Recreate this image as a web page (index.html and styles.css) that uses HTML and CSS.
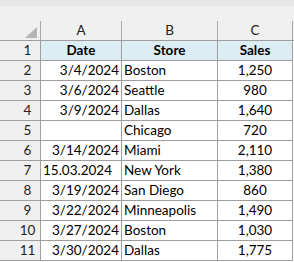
FILE: index.html
```html
<!DOCTYPE html>
<html>
<head>
<meta charset="utf-8">
<link rel="stylesheet" href="styles.css">
</head>
<body>
<div class="sheet">
  <div class="topband"></div>
  <div class="colheads">
    <div class="ch corner"><span class="tri"></span></div>
    <div class="ch ca">A</div>
    <div class="ch cb">B</div>
    <div class="ch cc">C</div>
  </div>
  <div class="grid">
    <div class="rh">1</div><div class="c hd">Date</div><div class="c hd">Store</div><div class="c hd">Sales</div>
    <div class="rh">2</div><div class="c r">3/4/2024</div><div class="c l">Boston</div><div class="c m">1,250</div>
    <div class="rh">3</div><div class="c r">3/6/2024</div><div class="c l">Seattle</div><div class="c m">980</div>
    <div class="rh">4</div><div class="c r">3/9/2024</div><div class="c l">Dallas</div><div class="c m">1,640</div>
    <div class="rh">5</div><div class="c r"></div><div class="c l">Chicago</div><div class="c m">720</div>
    <div class="rh">6</div><div class="c r">3/14/2024</div><div class="c l">Miami</div><div class="c m">2,110</div>
    <div class="rh">7</div><div class="c l">15.03.2024</div><div class="c l">New York</div><div class="c m">1,380</div>
    <div class="rh">8</div><div class="c r">3/19/2024</div><div class="c l">San Diego</div><div class="c m">860</div>
    <div class="rh">9</div><div class="c r">3/22/2024</div><div class="c l">Minneapolis</div><div class="c m">1,490</div>
    <div class="rh">10</div><div class="c r">3/27/2024</div><div class="c l">Boston</div><div class="c m">1,030</div>
    <div class="rh">11</div><div class="c r">3/30/2024</div><div class="c l">Dallas</div><div class="c m">1,775</div>
  </div>
</div>
</body>
</html>
```
FILE: styles.css
```css
html, body {
  margin: 0;
  padding: 0;
  background: #ffffff;
}
body {
  font-family: Lato, "Liberation Sans", sans-serif;
  font-size: 13.5px;
  color: #000000;
}
.sheet {
  width: 294px;
  height: 262px;
  overflow: hidden;
}
.topband {
  height: 6px;
  background: #e6e6e6;
}
.colheads {
  display: grid;
  grid-template-columns: 41px 81px 96px 75px;
  height: 34px;
  align-items: end;
  background: #f0f0f0;
  border-bottom: 1px solid #9e9e9e;
}
.ch {
  height: 19px;
  box-sizing: border-box;
  border-right: 1px solid #ababab;
  text-align: center;
  line-height: 18px;
  color: #222222;
}
.corner {
  display: flex;
  justify-content: flex-end;
  align-items: flex-end;
  padding: 0 3px 2px 0;
}
.tri {
  width: 0;
  height: 0;
  border-left: 12px solid transparent;
  border-bottom: 11px solid #b5b5b5;
}
.grid {
  display: grid;
  grid-template-columns: 41px 81px 96px 75px;
  grid-auto-rows: 20px;
}
.grid > div {
  box-sizing: border-box;
  border-right: 1px solid #9e9e9e;
  border-bottom: 1px solid #9e9e9e;
  line-height: 19px;
  white-space: nowrap;
  overflow: hidden;
}
.rh {
  background: #f0f0f0;
  text-align: center;
  padding-left: 15px;
  color: #222222;
}
.hd {
  background: #ddedf4;
  font-weight: bold;
  text-align: center;
}
.r {
  text-align: right;
  padding-right: 2px;
}
.l {
  text-align: left;
  padding-left: 2px;
}
.m {
  text-align: center;
}
```
